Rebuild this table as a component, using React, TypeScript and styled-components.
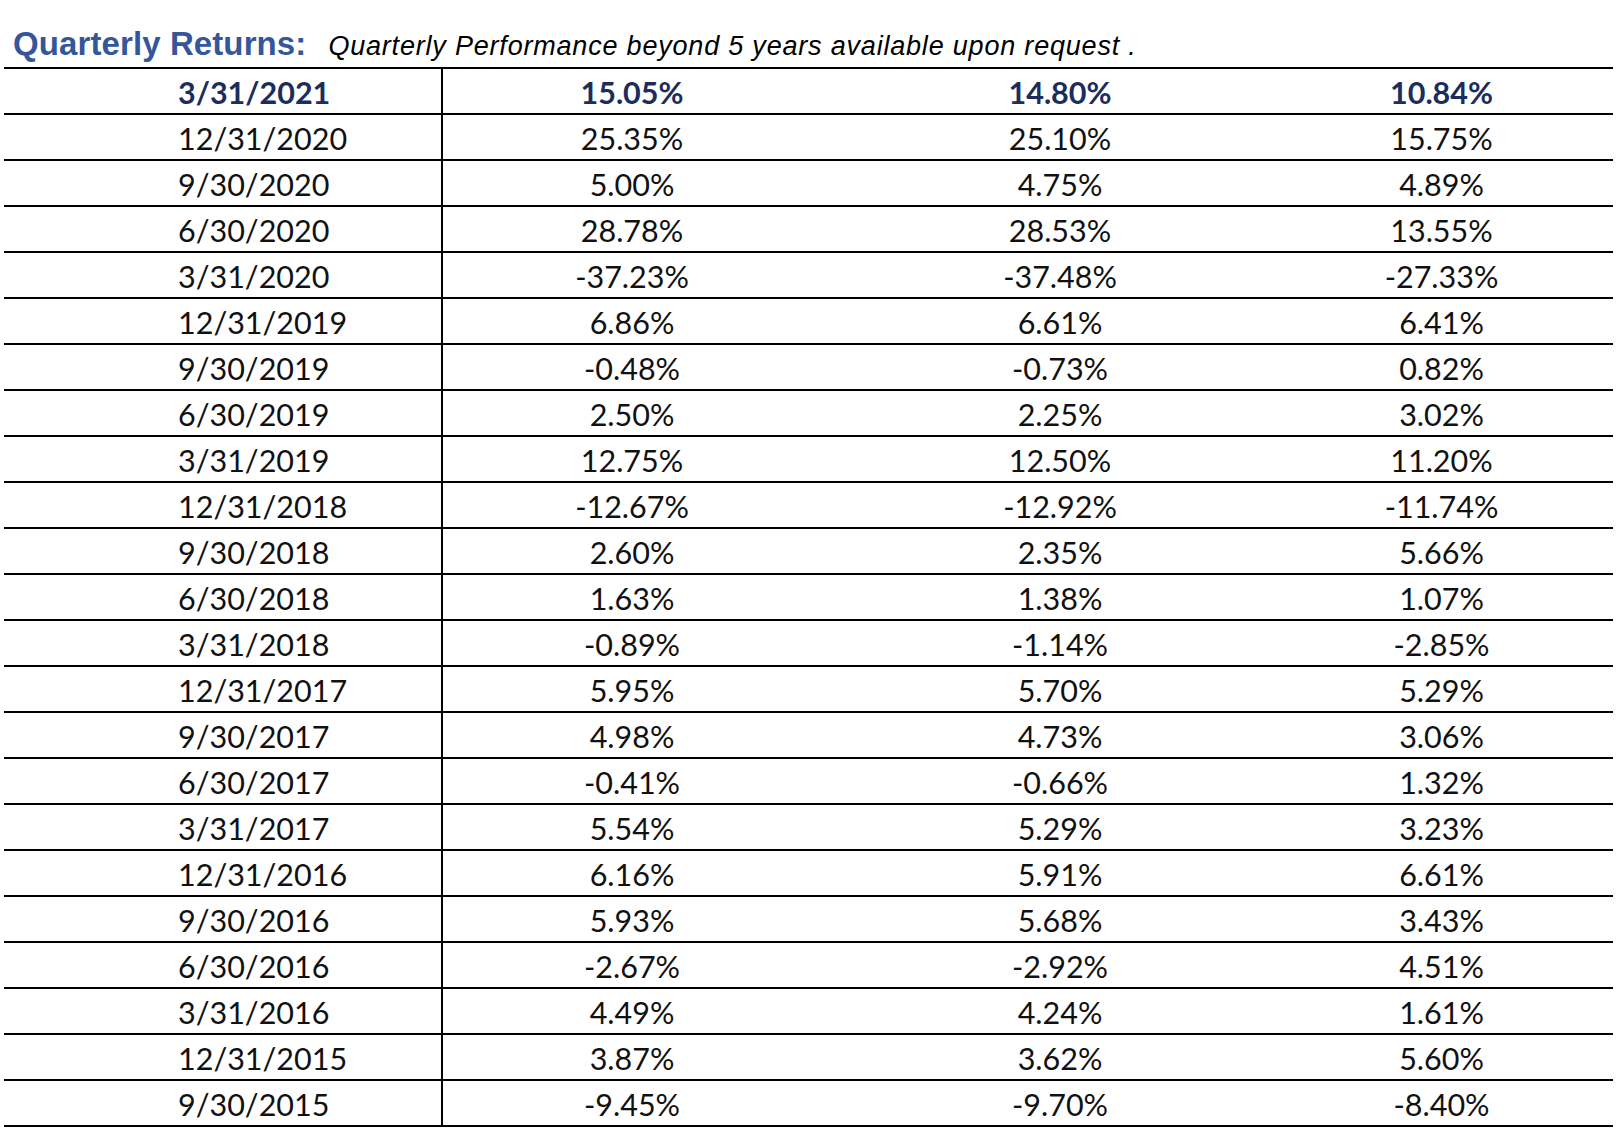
import React from "react";
import styled, { createGlobalStyle } from "styled-components";

const Global = createGlobalStyle`
  html, body { margin: 0; padding: 0; background: #ffffff; }
  #root { width: 1617px; }
`;

const Page = styled.div`
  width: 1617px;
  min-height: 1141px;
  background: #fff;
`;

const Header = styled.div`
  display: flex;
  align-items: baseline;
  padding: 26px 0 5px 13px;
  height: 36px;
  line-height: 36px;
  font-family: "Liberation Sans", Arial, sans-serif;
`;

const Title = styled.span`
  font-size: 33px;
  font-weight: 700;
  color: #34569b;
  letter-spacing: 0.1px;
`;

const Subtitle = styled.span`
  font-size: 27px;
  font-style: italic;
  letter-spacing: 0.8px;
  color: #000;
  margin-left: 22px;
`;

const Table = styled.div`
  margin-left: 4px;
  width: 1609px;
  border-top: 2px solid #000;
`;

const Row = styled.div<{ $head?: boolean }>`
  display: grid;
  grid-template-columns: 439px 378px 478px 1fr;
  height: 46px;
  box-sizing: border-box;
  border-bottom: 2px solid #000;
  font-family: Lato, "Open Sans", sans-serif;
  font-size: 30.5px;
  font-weight: ${(p) => (p.$head ? 700 : 400)};
  color: ${(p) => (p.$head ? "#1b2d5c" : "#111")};
`;

const Cell = styled.div<{ $align?: "left" | "center"; $first?: boolean; $last?: boolean }>`
  display: flex;
  align-items: center;
  justify-content: ${(p) => (p.$align === "left" ? "flex-start" : "center")};
  padding-left: ${(p) => (p.$first ? "174px" : "0")};
  padding-right: ${(p) => (p.$last ? "29px" : "0")};
  padding-top: 1px;
  box-sizing: border-box;
  border-right: ${(p) => (p.$first ? "2px solid #000" : "none")};
  white-space: nowrap;
`;

const rows: [string, string, string, string][] = [
  ["3/31/2021", "15.05%", "14.80%", "10.84%"],
  ["12/31/2020", "25.35%", "25.10%", "15.75%"],
  ["9/30/2020", "5.00%", "4.75%", "4.89%"],
  ["6/30/2020", "28.78%", "28.53%", "13.55%"],
  ["3/31/2020", "-37.23%", "-37.48%", "-27.33%"],
  ["12/31/2019", "6.86%", "6.61%", "6.41%"],
  ["9/30/2019", "-0.48%", "-0.73%", "0.82%"],
  ["6/30/2019", "2.50%", "2.25%", "3.02%"],
  ["3/31/2019", "12.75%", "12.50%", "11.20%"],
  ["12/31/2018", "-12.67%", "-12.92%", "-11.74%"],
  ["9/30/2018", "2.60%", "2.35%", "5.66%"],
  ["6/30/2018", "1.63%", "1.38%", "1.07%"],
  ["3/31/2018", "-0.89%", "-1.14%", "-2.85%"],
  ["12/31/2017", "5.95%", "5.70%", "5.29%"],
  ["9/30/2017", "4.98%", "4.73%", "3.06%"],
  ["6/30/2017", "-0.41%", "-0.66%", "1.32%"],
  ["3/31/2017", "5.54%", "5.29%", "3.23%"],
  ["12/31/2016", "6.16%", "5.91%", "6.61%"],
  ["9/30/2016", "5.93%", "5.68%", "3.43%"],
  ["6/30/2016", "-2.67%", "-2.92%", "4.51%"],
  ["3/31/2016", "4.49%", "4.24%", "1.61%"],
  ["12/31/2015", "3.87%", "3.62%", "5.60%"],
  ["9/30/2015", "-9.45%", "-9.70%", "-8.40%"],
];

export default function App() {
  return (
    <Page>
      <Global />
      <Header>
        <Title>Quarterly Returns:</Title>
        <Subtitle>Quarterly Performance beyond 5 years available upon request .</Subtitle>
      </Header>
      <Table>
        {rows.map((r, i) => (
          <Row key={r[0]} $head={i === 0}>
            <Cell $align="left" $first>{r[0]}</Cell>
            <Cell>{r[1]}</Cell>
            <Cell>{r[2]}</Cell>
            <Cell $last>{r[3]}</Cell>
          </Row>
        ))}
      </Table>
    </Page>
  );
}
